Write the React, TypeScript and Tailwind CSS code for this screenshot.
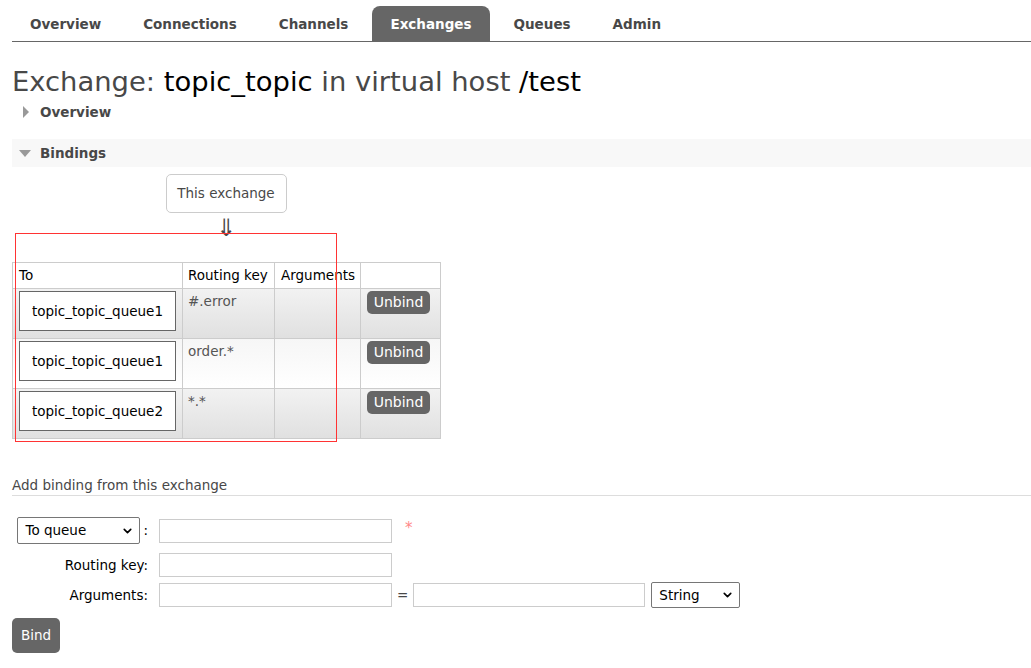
import { ChevronDown } from 'lucide-react';

const tabs = ['Overview', 'Connections', 'Channels', 'Exchanges', 'Queues', 'Admin'];

const bindings = [
  { queue: 'topic_topic_queue1', key: '#.error', alt: true },
  { queue: 'topic_topic_queue1', key: 'order.*', alt: false },
  { queue: 'topic_topic_queue2', key: '*.*', alt: true },
];

function Select({ label, width }: { label: string; width: string }) {
  return (
    <div className={`relative ${width}`}>
      <select className="w-full appearance-none border border-[#767676] rounded-[2px] bg-white pl-[7px] pr-[24px] text-[13.5px] text-black h-full outline-none">
        <option>{label}</option>
      </select>
      <ChevronDown
        className="absolute right-[6px] top-1/2 -translate-y-1/2 pointer-events-none text-black"
        size={13}
        strokeWidth={3}
      />
    </div>
  );
}

function TextInput({ width = 'w-[233px]' }: { width?: string }) {
  return <input type="text" className={`${width} h-[24px] border border-[#ccc] bg-white outline-none`} />;
}

export default function App() {
  return (
    <div className="relative min-h-[668px] bg-white font-['DejaVu_Sans',sans-serif] text-[13.5px] text-[#484848]">
      {/* top tabs */}
      <div className="ml-[12px] pt-[6px] border-b border-[#666]">
        <ul className="flex">
          {tabs.map((t) => (
            <li
              key={t}
              className={`h-[35px] px-[18px] mr-[6px] pt-[2px] flex items-center font-bold rounded-t-[8px] ${
                t === 'Exchanges' ? 'bg-[#666] text-white' : 'text-[#484848]'
              }`}
            >
              {t}
            </li>
          ))}
        </ul>
      </div>

      <h1 className="ml-[12px] mt-[24px] text-[27.4px] leading-[32px] text-[#484848]">
        Exchange: <span className="text-black">topic_topic</span> in virtual host{' '}
        <span className="text-black">/test</span>
      </h1>

      {/* collapsed overview */}
      <div className="ml-[12px] h-[28px] flex items-center">
        <span className="ml-[11px] w-0 h-0 border-y-[6px] border-y-transparent border-l-[6px] border-l-[#999]" />
        <span className="ml-[11px] font-bold">Overview</span>
      </div>

      {/* bindings section */}
      <div className="ml-[12px] mt-[13px] h-[28px] flex items-center bg-[#f8f8f8]">
        <span className="ml-[7px] w-0 h-0 border-x-[6px] border-x-transparent border-t-[7px] border-t-[#999]" />
        <span className="ml-[9px] font-bold">Bindings</span>
      </div>

      <div className="ml-[12px]">
        <div className="w-[428px] flex flex-col items-center">
          <div className="mt-[7px] w-[121px] h-[39px] border border-[#ccc] rounded-[5px] flex items-center justify-center text-[#484848]">
            This exchange
          </div>
          <div className="mt-[4px] h-[22px] text-[24px] leading-[22px] text-[#484848]">⇓</div>
        </div>

        <div className="relative mt-[23px] w-[428px]">
          <table className="border-collapse table-fixed w-[428px] whitespace-nowrap">
            <thead>
              <tr className="h-[26px] text-black">
                <th className="w-[170px] border border-[#ccc] text-left font-normal px-[6px]">To</th>
                <th className="w-[92px] border border-[#ccc] text-left font-normal pl-[5px] pr-0">Routing key</th>
                <th className="w-[86px] border border-[#ccc] text-left font-normal pl-[6px] pr-0">Arguments</th>
                <th className="w-[80px] border border-[#ccc]" />
              </tr>
            </thead>
            <tbody>
              {bindings.map((b, i) => (
                <tr
                  key={i}
                  className={`h-[50px] bg-gradient-to-b ${
                    b.alt ? 'from-[#f2f2f2] to-[#e0e0e0]' : 'from-[#f6f6f6] to-[#ffffff]'
                  }`}
                >
                  <td className="border border-[#ccc] p-0 align-top">
                    <div className="mt-[2px] ml-[6px] w-[157px] h-[40px] border border-[#666] bg-white flex items-center justify-center text-black">
                      {b.queue}
                    </div>
                  </td>
                  <td className="border border-[#ccc] align-top px-[5px] pt-[2px] text-[#555]">{b.key}</td>
                  <td className="border border-[#ccc]" />
                  <td className="border border-[#ccc] align-top p-0">
                    <button className="mt-[2px] ml-[6px] w-[63px] h-[23px] rounded-[5px] bg-[#666] text-white text-[14px]">
                      Unbind
                    </button>
                  </td>
                </tr>
              ))}
            </tbody>
          </table>

          {/* red outline overlay */}
          <div className="absolute left-[3px] top-[-29px] w-[322px] h-[209px] border border-[#f33] pointer-events-none" />
        </div>
      </div>

      {/* add binding */}
      <div className="ml-[12px] mt-[36px] border-b border-[#ddd] leading-[20px]">Add binding from this exchange</div>

      <div className="ml-[12px] mt-[21px] text-black">
        <div className="flex items-center h-[27px]">
          <div className="w-[136px] flex items-center justify-end h-full">
            <Select label="To queue" width="w-[123px] h-[27px]" />
            <span className="ml-[3px]">:</span>
          </div>
          <div className="ml-[11px]">
            <TextInput />
          </div>
          <span className="ml-[13px] text-[#f88] text-[15px] -mt-[4px]">*</span>
        </div>

        <div className="flex items-center h-[24px] mt-[9px]">
          <div className="w-[136px] text-right">Routing key:</div>
          <div className="ml-[11px]">
            <TextInput />
          </div>
        </div>

        <div className="flex items-center h-[26px] mt-[5px]">
          <div className="w-[136px] text-right">Arguments:</div>
          <div className="ml-[11px]">
            <TextInput />
          </div>
          <span className="ml-[5px] text-[#484848]">=</span>
          <div className="ml-[5px]">
            <TextInput width="w-[232px]" />
          </div>
          <div className="ml-[6px]">
            <Select label="String" width="w-[89px] h-[26px]" />
          </div>
        </div>

        <button className="mt-[10px] w-[48px] h-[35px] rounded-[5px] bg-[#666] text-white">Bind</button>
      </div>
    </div>
  );
}
